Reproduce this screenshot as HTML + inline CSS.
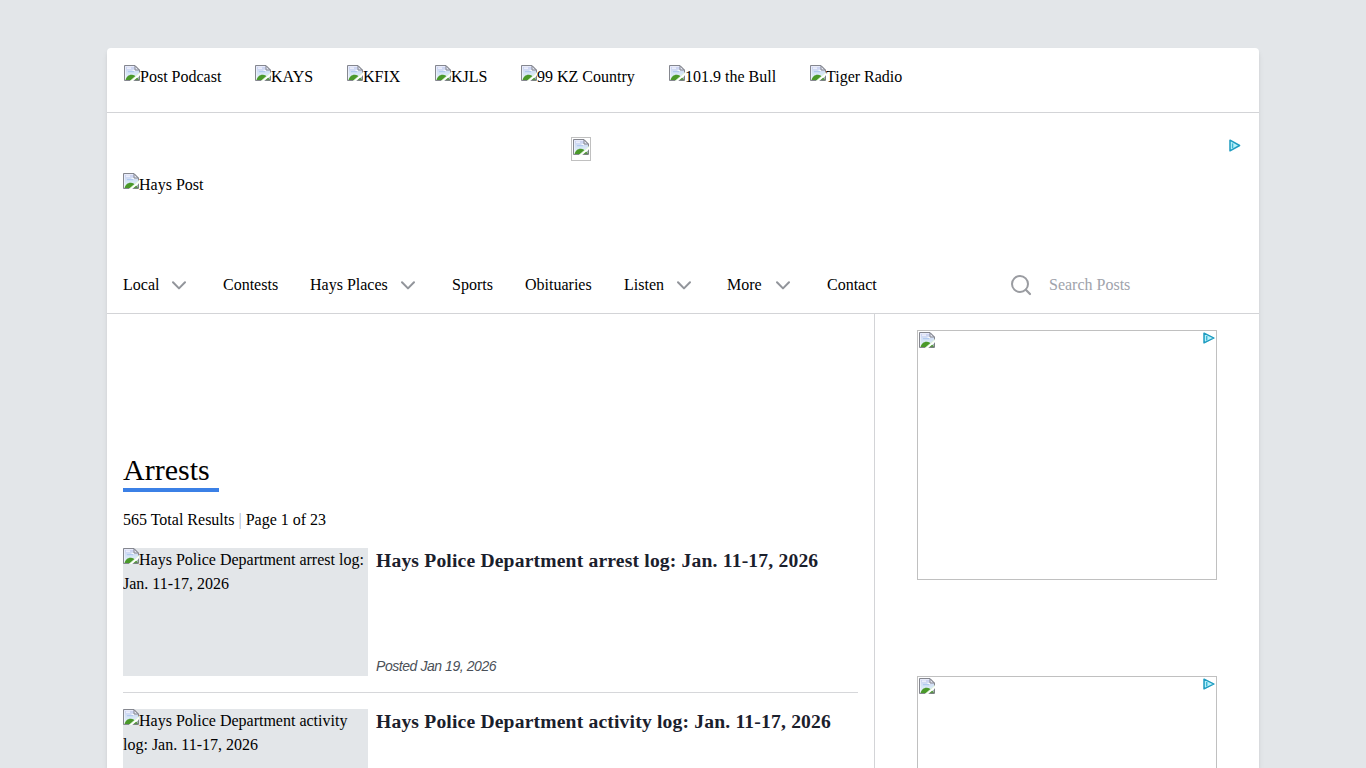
<!DOCTYPE html>
<html lang="en">
<head>
<meta charset="utf-8">
<title>Arrests - Hays Post</title>
<style>
html,body{margin:0;padding:0;}
body{width:1366px;height:768px;overflow:hidden;background:#e3e6e9;font-family:"Liberation Serif","Times New Roman",serif;font-size:16px;line-height:24px;color:#000;position:relative;}
a{color:inherit;text-decoration:none;}
.wrap{position:absolute;left:107px;top:48px;width:1152px;height:720px;background:#fff;border-radius:4px 4px 0 0;box-shadow:0 4px 6px -1px rgba(0,0,0,.1),0 2px 4px -1px rgba(0,0,0,.06);}
.abs{position:absolute;white-space:nowrap;}
.bi{display:inline-block;width:16px;height:16px;vertical-align:baseline;position:relative;top:-1px;}
.topbar{position:absolute;left:0;top:0;width:1152px;height:64px;border-bottom:1px solid #d3d4d7;}
.st{position:absolute;top:17px;height:24px;white-space:nowrap;}
.hdr{position:absolute;left:0;top:65px;width:1152px;height:144px;}
.nav{position:absolute;left:0;top:209px;width:1152px;height:56px;border-bottom:1px solid #d3d4d7;}
.nav .it{position:absolute;top:16px;height:24px;white-space:nowrap;}
.chev{position:absolute;top:24px;width:14px;height:9px;}
.vsep{position:absolute;left:767px;top:266px;width:1px;height:460px;background:#d3d4d7;}
.adbox{position:absolute;left:810px;width:298px;height:248px;border:1px solid #c0c0c0;background:#fff;}
.adbox .bi{position:absolute;left:1px;top:1px;}
.adc{position:absolute;width:12px;height:13px;}
.thumb{position:absolute;left:16px;width:245px;height:128px;background:#e3e6e9;overflow:hidden;white-space:normal;}
.title{position:absolute;left:269px;font-weight:bold;font-size:19.6px;letter-spacing:0.176px;line-height:28px;color:#1a202c;white-space:nowrap;}
.posted{position:absolute;left:269px;font-family:"Liberation Sans",Arial,sans-serif;font-style:italic;font-size:14px;letter-spacing:-0.44px;line-height:20px;color:#4a5058;white-space:nowrap;}
.hr{position:absolute;left:16px;width:735px;height:1px;background:#d6d7da;}
</style>
</head>
<body>
<svg width="0" height="0" style="position:absolute">
  <defs>
    <linearGradient id="sky" x1="0" y1="0" x2="0" y2="1">
      <stop offset="0" stop-color="#c9cdf0"/>
      <stop offset="0.55" stop-color="#d6e6f6"/>
      <stop offset="1" stop-color="#eef5fb"/>
    </linearGradient>
    <symbol id="broken" viewBox="0 0 16 16">
      <path d="M0.5 0.5 H11 L15.5 5 V15.5 H0.5 Z" fill="url(#sky)" stroke="#85878f" stroke-width="1"/>
      <path d="M1.5 15 V1.5 H10.5" fill="none" stroke="#f4f6fd" stroke-width="1" opacity="0.7"/>
      <path d="M3 3.2 H7 M8.5 5.4 H11.5" stroke="#fff" stroke-width="1.2" opacity="0.8"/>
      <path d="M4 6.6 H10" stroke="#a9c6ee" stroke-width="1.2" opacity="0.8"/>
      <path d="M1.5 15 C2.2 11.6 5 9.4 8 9.7 C11 10 13.4 12 15 15 Z" fill="#4a992a"/>
      <path d="M11.5 15 H15 V12" fill="none" stroke="#6f7f73" stroke-width="1"/>
      <path d="M11 0.8 V5 H15.2 Z" fill="#e3e6f2" stroke="#85878f" stroke-width="1" stroke-linejoin="round"/>
      <path d="M6.4 17 L17 7.9" stroke="#fff" stroke-width="2.1"/>
      <path d="M5.4 16.7 L16.8 6.9" stroke="#d4f4c8" stroke-width="0.7"/>
    </symbol>
    <symbol id="adch" viewBox="0 0 12 13" preserveAspectRatio="none">
      <path d="M1 1.2 L10.6 6.5 L1 11.8 Z" fill="#b9f1fb" stroke="#1f9cc0" stroke-width="1.5" stroke-linejoin="round"/>
      <path d="M3.6 4.4 V9.2" stroke="#3bb6d6" stroke-width="1.4"/>
    </symbol>
    <symbol id="chev" viewBox="0 0 14 9">
      <path d="M1 1.2 L7 7.4 L13 1.2" fill="none" stroke="#92959b" stroke-width="2" stroke-linecap="round" stroke-linejoin="round"/>
    </symbol>
  </defs>
</svg>

<div class="wrap">
  <div class="topbar">
    <a class="st" style="left:17px"><svg class="bi"><use href="#broken"/></svg>Post Podcast</a>
    <a class="st" style="left:148px"><svg class="bi"><use href="#broken"/></svg>KAYS</a>
    <a class="st" style="left:240px"><svg class="bi"><use href="#broken"/></svg>KFIX</a>
    <a class="st" style="left:328px"><svg class="bi"><use href="#broken"/></svg>KJLS</a>
    <a class="st" style="left:414px"><svg class="bi"><use href="#broken"/></svg>99 KZ Country</a>
    <a class="st" style="left:562px"><svg class="bi"><use href="#broken"/></svg>101.9 the Bull</a>
    <a class="st" style="left:703px"><svg class="bi"><use href="#broken"/></svg>Tiger Radio</a>
  </div>

  <div class="hdr">
    <a class="abs" style="left:16px;top:60px;height:24px"><svg class="bi"><use href="#broken"/></svg>Hays Post</a>
    <div class="abs" style="left:464px;top:24px;width:18px;height:22px;border:1px solid #c0c0c0;"><svg class="bi" style="position:absolute;left:1px;top:1px"><use href="#broken"/></svg></div>
    <svg class="adc" style="left:1122px;top:26px"><use href="#adch"/></svg>
  </div>

  <div class="nav">
    <a class="it" style="left:16px">Local</a><svg class="chev" style="left:65px"><use href="#chev"/></svg>
    <a class="it" style="left:116px">Contests</a>
    <a class="it" style="left:203px">Hays Places</a><svg class="chev" style="left:294px"><use href="#chev"/></svg>
    <a class="it" style="left:345px">Sports</a>
    <a class="it" style="left:418px">Obituaries</a>
    <a class="it" style="left:517px">Listen</a><svg class="chev" style="left:570px"><use href="#chev"/></svg>
    <a class="it" style="left:620px">More</a><svg class="chev" style="left:669px"><use href="#chev"/></svg>
    <a class="it" style="left:720px">Contact</a>
    <svg class="abs" style="left:902px;top:17px" width="24" height="24" viewBox="0 0 24 24"><circle cx="11" cy="10" r="8" fill="none" stroke="#9a9ca1" stroke-width="2"/><path d="M16.8 15.8 L21 20" stroke="#9a9ca1" stroke-width="2.2" stroke-linecap="round"/></svg>
    <span class="it" style="left:942px;color:#a0a3ab">Search Posts</span>
  </div>

  <div class="vsep"></div>

  <div class="abs" style="left:16px;top:404px;font-size:30px;line-height:36px;">Arrests</div>
  <div class="abs" style="left:16px;top:440px;width:96px;height:4px;background:#3b80e6;"></div>
  <div class="abs" style="left:16px;top:460px;">565 Total Results <span style="color:#a9b1bf">|</span> Page 1 of 23</div>

  <div class="thumb" style="top:500px"><svg class="bi"><use href="#broken"/></svg>Hays Police Department arrest log: Jan. 11-17, 2026</div>
  <a class="title" style="top:499px">Hays Police Department arrest log: Jan. 11-17, 2026</a>
  <div class="posted" style="top:608px">Posted Jan 19, 2026</div>
  <div class="hr" style="top:644px"></div>

  <div class="thumb" style="top:661px"><svg class="bi"><use href="#broken"/></svg>Hays Police Department activity log: Jan. 11-17, 2026</div>
  <a class="title" style="top:660px">Hays Police Department activity log: Jan. 11-17, 2026</a>

  <div class="adbox" style="top:282px"><svg class="bi"><use href="#broken"/></svg><svg class="adc" style="left:285px;top:1px;width:12.4px;height:12px"><use href="#adch"/></svg></div>
  <div class="adbox" style="top:628px"><svg class="bi"><use href="#broken"/></svg><svg class="adc" style="left:285px;top:1px;width:12.4px;height:12px"><use href="#adch"/></svg></div>
</div>
</body>
</html>
